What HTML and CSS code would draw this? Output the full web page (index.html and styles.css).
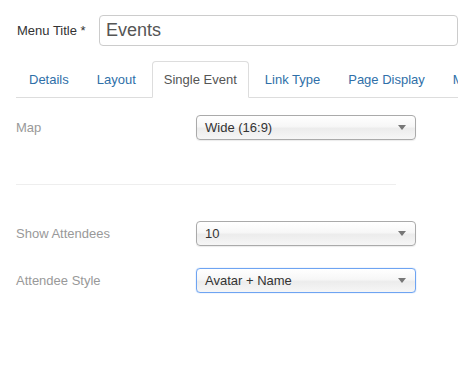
FILE: index.html
```html
<!DOCTYPE html>
<html lang="en">
<head>
    <meta charset="UTF-8">
    <title>Edit Menu Item</title>
    <link rel="stylesheet" href="styles.css">
</head>
<body>

    <div class="title-row">
        <label class="title-label">Menu Title *</label>
        <input type="text" class="title-input" value="Events">
    </div>

    <ul class="tabs">
        <li><a href="#">Details</a></li>
        <li><a href="#">Layout</a></li>
        <li class="active"><a href="#">Single Event</a></li>
        <li><a href="#">Link Type</a></li>
        <li><a href="#">Page Display</a></li>
        <li><a href="#">Metadata</a></li>
    </ul>

    <div class="pane">
        <div class="field">
            <span class="field-label">Map</span>
            <div class="select"><span>Wide (16:9)</span><span class="caret"></span></div>
        </div>

        <hr class="divider">

        <div class="field">
            <span class="field-label">Show Attendees</span>
            <div class="select"><span>10</span><span class="caret"></span></div>
        </div>

        <div class="field">
            <span class="field-label">Attendee Style</span>
            <div class="select focus"><span>Avatar + Name</span><span class="caret"></span></div>
        </div>
    </div>

</body>
</html>
```

FILE: styles.css
```css
body {
    margin: 0;
    font-family: 'Liberation Sans', Arial, sans-serif;
    font-size: 13px;
    color: #333;
    background: #fff;
    overflow: hidden;
}

.title-row {
    display: flex;
    align-items: center;
    padding: 15px 0 0 17px;
}

.title-label {
    width: 82px;
    flex-shrink: 0;
    color: #333;
}

.title-input {
    width: 400px;
    height: 31px;
    box-sizing: border-box;
    border: 1px solid #ccc;
    border-radius: 4px;
    padding: 0 6px;
    font-family: inherit;
    font-size: 18px;
    color: #555;
    outline: none;
}

.tabs {
    display: flex;
    list-style: none;
    margin: 15px 0 0 16px;
    padding: 0 0 0 1px;
    border-bottom: 1px solid #ddd;
    white-space: nowrap;
}

.tabs li {
    margin: 0 4px -1px 0;
}

.tabs a {
    display: block;
    padding: 0 11px;
    line-height: 35px;
    border: 1px solid transparent;
    border-radius: 4px 4px 0 0;
    color: #2f6fa8;
    text-decoration: none;
}

.tabs .active a {
    color: #555;
    background: #fff;
    border-color: #ddd #ddd transparent;
}

.pane {
    padding: 17px 0 0 16px;
}

.field {
    display: flex;
    align-items: center;
    margin-bottom: 22px;
}

.field-label {
    width: 180px;
    color: #999;
}

.select {
    width: 220px;
    height: 25px;
    box-sizing: border-box;
    display: flex;
    align-items: center;
    justify-content: space-between;
    padding: 0 9px 0 8px;
    border: 1px solid #aaa;
    border-radius: 4px;
    background: linear-gradient(#fff, #f7f7f7 45%, #ececec 55%, #f6f6f6);
    color: #333;
    box-shadow: 0 1px 1px rgba(0, 0, 0, 0.08);
}

.select.focus {
    border-color: #6ea4f2;
    box-shadow: 0 0 1px #6ea4f2;
}

.caret {
    width: 0;
    height: 0;
    border-left: 4px solid transparent;
    border-right: 4px solid transparent;
    border-top: 5px solid #777;
}

.divider {
    width: 380px;
    margin: 44px 0 36px 0;
    border: none;
    border-top: 1px solid #eee;
}
```
